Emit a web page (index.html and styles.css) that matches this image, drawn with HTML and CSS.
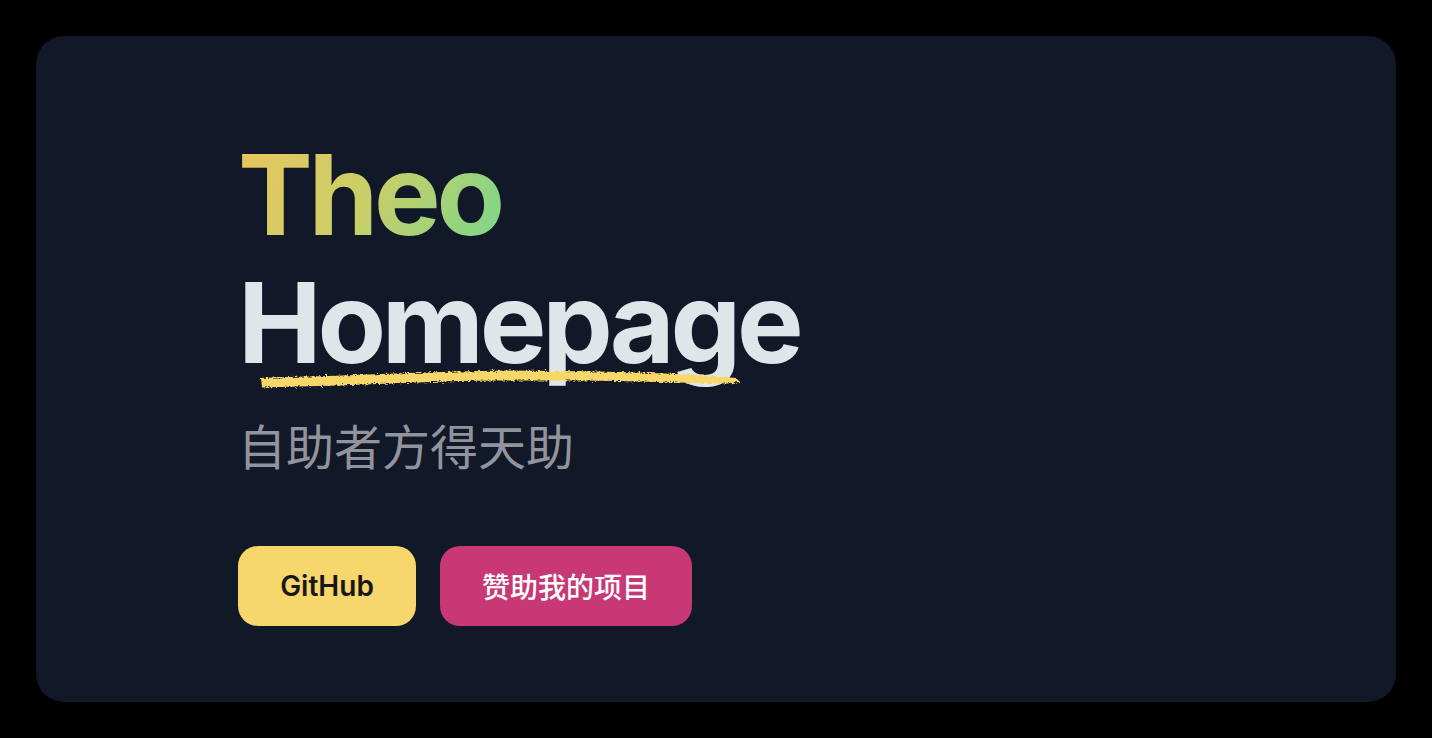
FILE: index.html
```html
<!DOCTYPE html>
<html lang="zh-CN">
<head>
  <meta charset="UTF-8">
  <meta name="viewport" content="width=device-width, initial-scale=1.0">
  <title>Theo Homepage</title>
  <link rel="stylesheet" href="styles.css">
</head>
<body>
  <div id="card">
    <h1 class="title">
      <span class="title-first">Theo</span>
      <span class="title-second">
        Homepage
        <svg class="brush" viewBox="0 0 484 24" preserveAspectRatio="none">
          <defs>
            <filter id="rough" x="-5%" y="-50%" width="110%" height="200%">
              <feTurbulence type="fractalNoise" baseFrequency="0.3 0.8" numOctaves="3" seed="7"/>
              <feDisplacementMap in="SourceGraphic" scale="5"/>
            </filter>
          </defs>
          <path filter="url(#rough)" fill="#f7d66b"
            d="M3 12 L30 11 L70 10 L110 8.5 L150 7 L200 5.5 L250 4.5 L300 5 L340 5.5 L380 6.5 L420 8 L455 10 L478 12 L482 16
               L470 17.5 L440 17 L400 16 L360 15 L320 14.5 L280 14.5 L240 14.5 L200 15 L160 16.5 L120 18 L80 19.5 L40 20.5 L4 21.5 Z"/>
        </svg>
      </span>
    </h1>
    <p class="subtitle">自助者方得天助</p>
    <div class="actions">
      <a class="btn btn-github" href="#">GitHub</a>
      <a class="btn btn-sponsor" href="#">赞助我的项目</a>
    </div>
  </div>
</body>
</html>
```

FILE: styles.css
```css
body {
  margin: 0;
  padding: 36px;
  background-color: #000;
  font-family: Inter, "Noto Sans CJK SC", sans-serif;
}

#card {
  height: 666px;
  box-sizing: border-box;
  padding: 94px 0 0 202px;
  background-color: #111827;
  border-radius: 28px;
}

.title {
  margin: 0;
  font-size: 112px;
  font-weight: 700;
  line-height: 128px;
  letter-spacing: -0.038em;
}

.title span {
  display: block;
}

.title-first {
  background: linear-gradient(120deg, #ebc45e 0%, #c9cf68 50%, #78d68c 100%);
  -webkit-background-clip: text;
  background-clip: text;
  color: transparent;
  width: fit-content;
}

.title-second {
  position: relative;
  color: #dde7ea;
  width: fit-content;
}

.brush {
  position: absolute;
  left: 20px;
  top: 108px;
  width: 484px;
  height: 24px;
}

.subtitle {
  margin: 28px 0 0;
  font-family: "Noto Sans CJK SC", sans-serif;
  font-size: 48px;
  line-height: 60px;
  color: #92939c;
}

.actions {
  display: flex;
  gap: 24px;
  margin-top: 72px;
}

.btn {
  display: flex;
  align-items: center;
  justify-content: center;
  height: 80px;
  border-radius: 20px;
  font-size: 28px;
  font-weight: 600;
  text-decoration: none;
}

.btn-github {
  width: 178px;
  background-color: #f7d66b;
  color: #17171a;
}

.btn-sponsor {
  width: 252px;
  background-color: #c73874;
  color: #fff;
  font-family: "Noto Sans CJK SC", sans-serif;
  font-weight: 500;
}
```
